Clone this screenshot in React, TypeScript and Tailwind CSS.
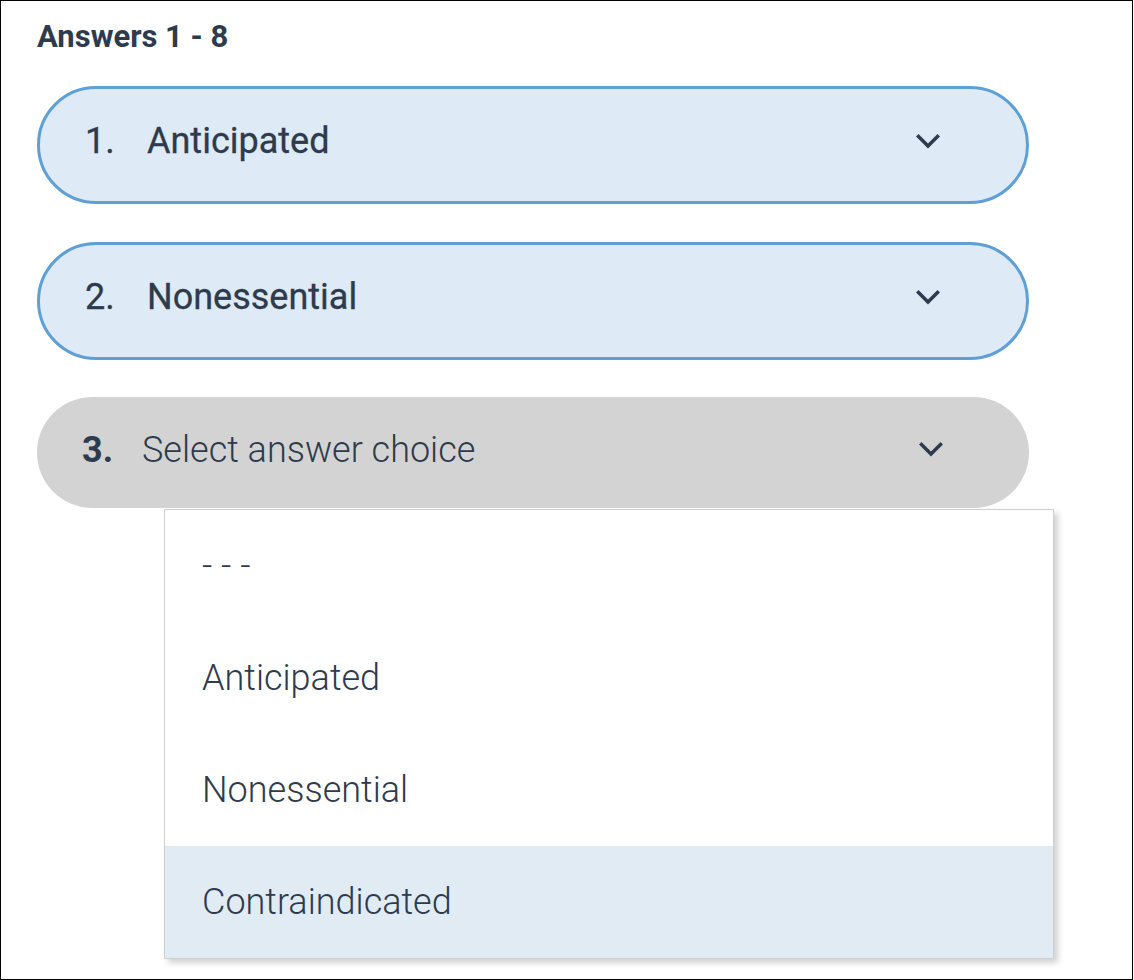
import React from 'react';

interface Answer {
  num: number;
  label?: string;
}

const answers: Answer[] = [
  { num: 1, label: 'Anticipated' },
  { num: 2, label: 'Nonessential' },
];

const options = ['- - -', 'Anticipated', 'Nonessential', 'Contraindicated'];

const Chevron = () => (
  <svg width="24" height="15" viewBox="0 0 24 15" fill="none">
    <path d="M2.5 2.5 L12 12 L21.5 2.5" stroke="#2d3b4d" strokeWidth="3.5" strokeLinecap="square" strokeLinejoin="miter" />
  </svg>
);

const App = () => {
  return (
    <div
      className="w-[1133px] h-[980px] border border-black bg-white pl-[36px] pt-[18px] text-[#2d3b4d]"
      style={{ fontFamily: 'Roboto, "Noto Sans", sans-serif' }}
    >
      <h2 className="text-[31px] leading-[36px] font-bold">Answers 1 - 8</h2>

      <div className="mt-[31px] flex flex-col gap-[38px] w-[992px]">
        {answers.map((a) => (
          <div
            key={a.num}
            className="h-[118px] rounded-full border-[3px] border-[#5e9fd6] bg-[#deebf6] flex items-center pl-[45px] pr-[86px] pb-[8px] [-webkit-text-stroke:0.3px_#2d3b4d]"
          >
            <span className="text-[36px] font-normal w-[62px]">{a.num}.</span>
            <span className="text-[36px] font-normal flex-1">{a.label}</span>
            <Chevron />
          </div>
        ))}

        <div className="relative -mt-[1px]">
          <div className="h-[111px] rounded-full bg-[#d3d3d3] flex items-center pl-[45px] pr-[86px] pb-[6px]">
            <span className="text-[36px] font-bold w-[60px]">3.</span>
            <span className="text-[36px] font-light flex-1">Select answer choice</span>
            <Chevron />
          </div>

          <ul className="absolute left-[127px] top-[112px] w-[890px] bg-white border border-[#cfcfcf] shadow-[4px_4px_6px_rgba(0,0,0,0.18)]">
            {options.map((opt, i) => (
              <li
                key={opt}
                className={`h-[112px] flex items-center pl-[37px] text-[36px] font-light ${i === options.length - 1 ? 'bg-[#e1ebf4]' : ''}`}
              >
                {opt}
              </li>
            ))}
          </ul>
        </div>
      </div>
    </div>
  );
};

export default App;
